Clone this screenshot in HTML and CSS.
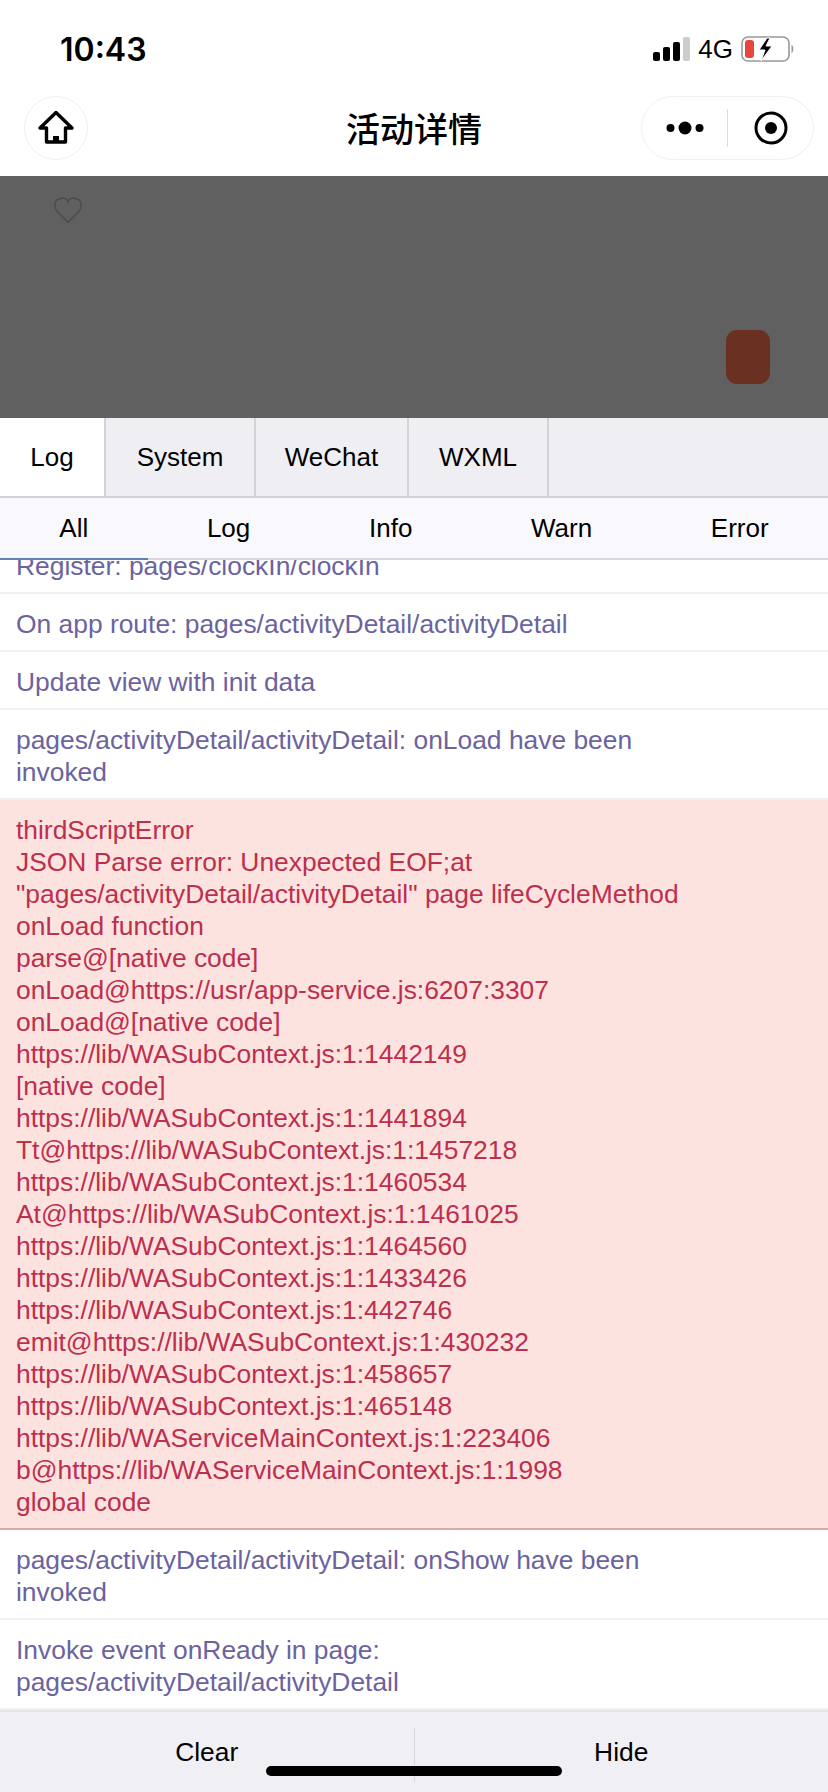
FILE: index.html
```html
<!DOCTYPE html>
<html lang="en">
<head>
<meta charset="utf-8">
<title>活动详情</title>
<link rel="stylesheet" href="styles.css">
</head>
<body>
<div class="phone">
  <div class="status">
    <span class="time">10:43</span>
    <div class="status-right">
      <svg class="signal" width="37" height="24" viewBox="0 0 37 24"><rect x="0" y="15" width="7" height="9" rx="2" fill="#000"/><rect x="10" y="10" width="7" height="14" rx="2" fill="#000"/><rect x="20" y="5" width="7" height="19" rx="2" fill="#000"/><rect x="30" y="0" width="7" height="24" rx="2" fill="#ccc"/></svg>
      <span class="net">4G</span>
      <svg class="battery" width="54" height="26" viewBox="0 0 54 26"><rect x="1" y="1" width="47" height="24" rx="6" fill="none" stroke="#999" stroke-width="1.6"/><rect x="4" y="4" width="9" height="18" rx="3" fill="#e8453c"/><path d="M26 2 L18 14 H24 L20 25 L31 10 H25 L29 2Z" fill="#000" stroke="#fff" stroke-width="1"/><path d="M50.500 9 C53 10 53 16 50.500 17Z" fill="#999"/></svg>
    </div>
  </div>
  <div class="nav">
    <div class="home">
      <svg width="38" height="36" viewBox="0 0 38 36"><path d="M19 2.500 L35 18 H28.500 V32 H9.500 V18 H3Z" fill="none" stroke="#000" stroke-width="3.400" stroke-linejoin="round"/><rect x="16" y="26" width="6" height="6" fill="#000"/></svg>
    </div>
    <div class="nav-title">活动详情</div>
    <div class="capsule">
      <div class="cap-side">
        <svg width="38" height="14" viewBox="0 0 38 14"><circle cx="4.500" cy="7" r="4" fill="#000"/><circle cx="19" cy="7" r="6.500" fill="#000"/><circle cx="33.500" cy="7" r="4" fill="#000"/></svg>
      </div>
      <div class="cap-side cap-second">
        <svg width="34" height="34" viewBox="0 0 34 34"><circle cx="17" cy="17" r="15" fill="none" stroke="#000" stroke-width="3"/><circle cx="17" cy="17" r="6" fill="#000"/></svg>
      </div>
    </div>
  </div>
  <div class="hero">
    <svg class="heart" width="30" height="27" viewBox="0 0 30 28"><path d="M15 26.500 L3.500 14.500 C-0.500 10 1 3 6.500 1.800 C10 0.200 13.500 1.500 15 4.800 C16.500 1.500 20 0.200 23.500 1.800 C29 3 30.500 10 26.500 14.500Z" fill="none" stroke="#4b4b4b" stroke-width="1.500"/></svg>
    <div class="red-btn"></div>
  </div>
  <div class="tabs">
    <div class="tab tab-active tab-log">Log</div>
    <div class="tab tab-system">System</div>
    <div class="tab tab-wechat">WeChat</div>
    <div class="tab tab-wxml">WXML</div>
  </div>
  <div class="filters">
    <div class="filter filter-active">All</div>
    <div class="filter">Log</div>
    <div class="filter">Info</div>
    <div class="filter">Warn</div>
    <div class="filter">Error</div>
  </div>
  <div class="logs">
    <div class="logs-inner">
      <div class="row">Register: pages/clockIn/clockIn</div>
      <div class="row">On app route: pages/activityDetail/activityDetail</div>
      <div class="row">Update view with init data</div>
      <div class="row">pages/activityDetail/activityDetail: onLoad have been invoked</div>
      <div class="row row-error">thirdScriptError<br>JSON Parse error: Unexpected EOF;at "pages/activityDetail/activityDetail" page lifeCycleMethod onLoad function<br>parse@[native code]<br>onLoad@https://usr/app-service.js:6207:3307<br>onLoad@[native code]<br>https://lib/WASubContext.js:1:1442149<br>[native code]<br>https://lib/WASubContext.js:1:1441894<br>Tt@https://lib/WASubContext.js:1:1457218<br>https://lib/WASubContext.js:1:1460534<br>At@https://lib/WASubContext.js:1:1461025<br>https://lib/WASubContext.js:1:1464560<br>https://lib/WASubContext.js:1:1433426<br>https://lib/WASubContext.js:1:442746<br>emit@https://lib/WASubContext.js:1:430232<br>https://lib/WASubContext.js:1:458657<br>https://lib/WASubContext.js:1:465148<br>https://lib/WAServiceMainContext.js:1:223406<br>b@https://lib/WAServiceMainContext.js:1:1998<br>global code</div>
      <div class="row">pages/activityDetail/activityDetail: onShow have been invoked</div>
      <div class="row">Invoke event onReady in page: pages/activityDetail/activityDetail</div>
    </div>
  </div>
  <div class="toolbar">
    <div class="tool">Clear</div>
    <div class="tool-divider"></div>
    <div class="tool">Hide</div>
    <div class="home-bar"></div>
  </div>
</div>
</body>
</html>
```
FILE: styles.css
```css
* { box-sizing: border-box; }
html, body { margin: 0; padding: 0; }
body { font-family: "Liberation Sans", "Noto Sans CJK SC", sans-serif; background: #fff; color: #000; }
.phone { width: 828px; height: 1792px; display: flex; flex-direction: column; overflow: hidden; position: relative; }
.status { height: 96px; flex: none; display: flex; justify-content: space-between; align-items: center; padding: 2px 33px 0 60px; }
.time { font-family: Inter, "Liberation Sans", sans-serif; font-size: 32px; font-weight: 600; }
.status-right { display: flex; align-items: center; gap: 8px; }
.net { font-size: 26px; }
.nav { height: 80px; flex: none; display: flex; align-items: flex-start; justify-content: space-between; padding: 0 14px 0 24px; position: relative; }
.home { width: 64px; height: 64px; border-radius: 50%; border: 1px solid #f0f0f0; display: flex; align-items: center; justify-content: center; }
.nav-title { position: absolute; left: 0; right: 0; top: 8px; text-align: center; font-size: 34px; line-height: 48px; font-weight: 500; font-family: "Noto Sans CJK SC", sans-serif; }
.capsule { width: 173px; height: 64px; border-radius: 32px; border: 1px solid #f0f0f0; display: flex; align-items: center; }
.cap-side { flex: 1; height: 38px; display: flex; align-items: center; justify-content: center; }
.cap-second { border-left: 1px solid #ddd; }
.hero { height: 242px; flex: none; background: #606060; position: relative; }
.heart { position: absolute; left: 53px; top: 21px; }
.red-btn { position: absolute; left: 726px; top: 154px; width: 44px; height: 54px; border-radius: 11px; background: #6a3021; }
.tabs { height: 80px; flex: none; display: flex; background: #eeeef3; border-bottom: 2px solid #d4d4d8; }
.tab { font-size: 26px; display: flex; align-items: center; justify-content: center; border-right: 2px solid #d4d4d8; }
.tab-active { background: #fff; }
.tab-log { width: 106px; }
.tab-system { width: 150px; }
.tab-wechat { width: 153px; }
.tab-wxml { width: 140px; }
.filters { height: 62px; flex: none; display: flex; background: #f9f9fd; border-bottom: 2px solid #d8d8dc; }
.filter { flex: 1 1 auto; font-size: 26px; display: flex; align-items: center; justify-content: center; position: relative; }
.filter-active::after { content: ""; position: absolute; left: 0; right: 0; bottom: -2px; height: 2px; background: #6480b4; }
.logs { flex: 1; min-height: 0; overflow: hidden; background: #fff; border-bottom: 2px solid #e4e4e8; }
.logs-inner { margin-top: -24px; }
.row { padding: 14px 130px 10px 16px; font-size: 26.400px; line-height: 32px; color: #6b63a0; border-bottom: 2px solid #f0f0f0; }
.row-error { background: #fce3df; color: #bd2f4e; border-bottom-color: #d8aaaa; }
.toolbar { height: 80px; flex: none; display: flex; align-items: center; background: #efeff4; position: relative; }
.tool { flex: 1; font-size: 26.400px; text-align: center; }
.tool-divider { width: 1px; height: 54px; margin-top: 6px; background: #d8d8dc; }
.home-bar { position: absolute; left: 266px; top: 54px; width: 296px; height: 10px; border-radius: 5px; background: #000; }
```
